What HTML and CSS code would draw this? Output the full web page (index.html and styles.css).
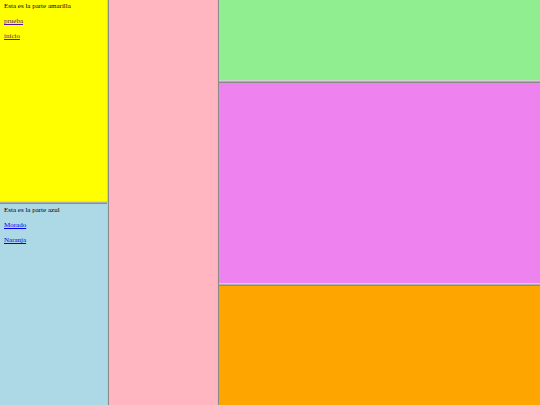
FILE: index.html
```html
<!DOCTYPE html>
<html>
<head>
<meta charset="utf-8">
<link rel="stylesheet" href="styles.css">
</head>
<body>
<div class="frameset">
  <div class="col col-left">
    <div class="frame yellow">
      <div class="line">Esta es la parte amarilla</div>
      <p><a class="visited" href="#">prueba</a></p>
      <p><a class="visited" href="#">inicio</a></p>
    </div>
    <div class="hdiv"></div>
    <div class="frame blue">
      <div class="line">Esta es la parte azul</div>
      <p><a href="#">Morado</a></p>
      <p><a href="#">Naranja</a></p>
    </div>
  </div>
  <div class="vdiv"></div>
  <div class="col col-mid">
    <div class="frame pink"></div>
  </div>
  <div class="vdiv"></div>
  <div class="col col-right">
    <div class="frame green"></div>
    <div class="hdiv"></div>
    <div class="frame violet"></div>
    <div class="hdiv"></div>
    <div class="frame orange"></div>
  </div>
</div>
</body>
</html>
```
FILE: styles.css
```css
html, body {
  margin: 0;
  padding: 0;
  width: 540px;
  height: 405px;
  overflow: hidden;
  background: #c0c0c0;
}
.frameset {
  display: flex;
  width: 540px;
  height: 405px;
  font-family: "Liberation Serif", "Times New Roman", serif;
  font-size: 7px;
  line-height: 8px;
  color: #000;
}
.col {
  display: flex;
  flex-direction: column;
  height: 405px;
}
.col-left { width: 107px; }
.col-mid { width: 108px; }
.col-right { flex: 1; }
.vdiv {
  width: 0;
  border-left: 1px solid #c8c8c8;
  border-right: 1px solid #8a8a8a;
}
.hdiv {
  height: 1px;
  border-top: 1px solid #d0d0d0;
  border-bottom: 1px solid #8a8a8a;
  background: #b0b0b0;
}
.frame {
  box-sizing: border-box;
  padding: 2px 4px;
  overflow: hidden;
}
.col-left .yellow { height: 201px; background: #ffff00; }
.col-left .blue { flex: 1; background: #add8e6; }
.pink { flex: 1; background: #ffb6c1; }
.green { height: 80px; background: #90ee90; }
.violet { height: 200px; background: #ee82ee; }
.orange { flex: 1; background: #ffa500; }
.frame p { margin: 7px 0; }
a { color: #0000ee; text-decoration: underline; }
a.visited { color: #551a8b; }
```
